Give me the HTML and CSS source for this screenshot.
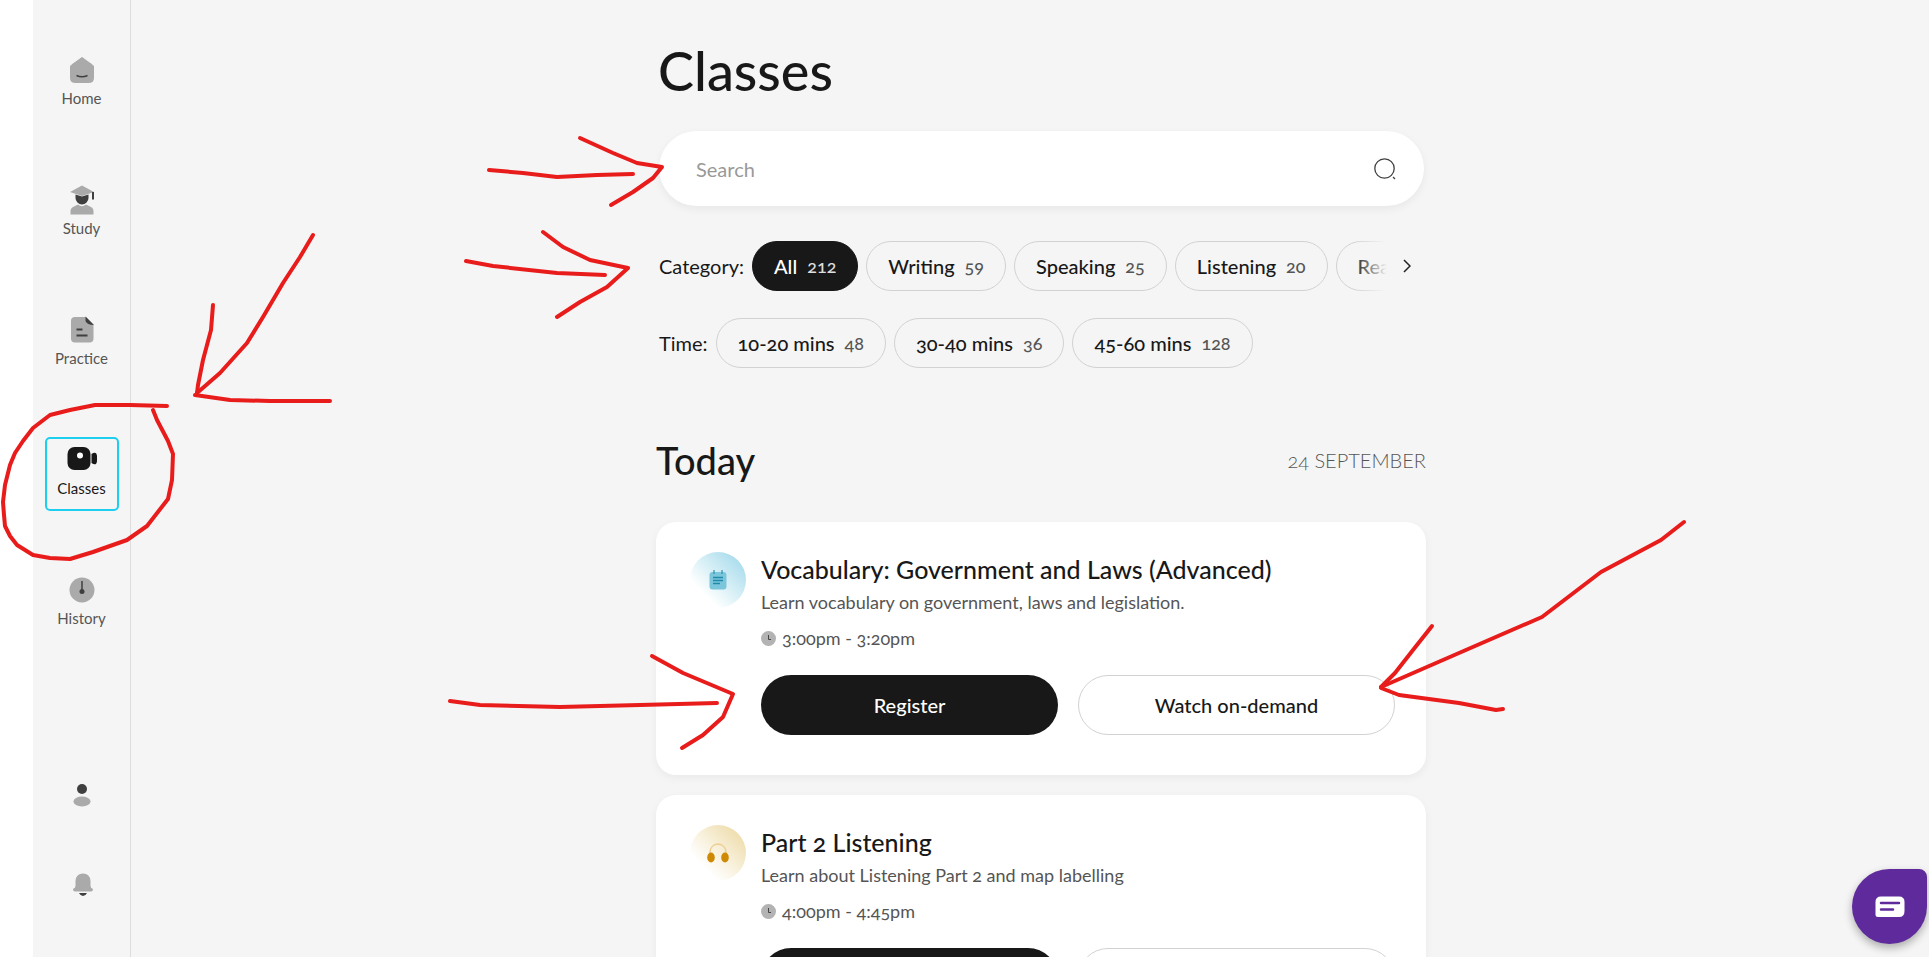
FILE: index.html
```html
<!DOCTYPE html>
<html lang="en">
<head>
<meta charset="utf-8">
<title>Classes</title>
<link rel="stylesheet" href="styles.css">
</head>
<body>
<div class="app">
	<nav class="sidebar">
		<a class="nav-item">
			<svg class="nav-icon" viewBox="0 0 30 30"><path d="M15 2.500 L25.500 10 Q26.500 10.800 26.500 12 V23.500 Q26.500 27.500 22.500 27.500 H7.500 Q3.500 27.500 3.500 23.500 V12 Q3.500 10.800 4.500 10 Z" fill="#aaa" stroke="#aaa" stroke-linejoin="round"/><path d="M9.500 20.500 Q15 23 20.500 20.500" fill="none" stroke="#3f3f3f" stroke-width="1.500"/></svg>
			<span>Home</span>
		</a>
		<a class="nav-item nav-study">
			<svg class="nav-icon" viewBox="0 0 30 30"><path d="M15 .500 L27 7 L15 11 L3 7 Z" fill="#aaa"/><path d="M8.500 9.500 L15 11.500 L21.500 9.500 V13 A6.500 6.500 0 0 1 8.500 13 Z" fill="#3f3f3f"/><rect x="25" y="7" width="2" height="7.500" fill="#3f3f3f"/><path d="M3.500 29.500 V26 Q3.500 22.500 8 21 L11 19.500 Q15 23 19 19.500 L22 21 Q26.500 22.500 26.500 26 V29.500 Z" fill="#aaa"/></svg>
			<span>Study</span>
		</a>
		<a class="nav-item">
			<svg class="nav-icon" viewBox="0 0 30 30"><path d="M8 2 H19 L26.500 10 V23.500 Q26.500 27.500 22.500 27.500 H8 Q4 27.500 4 23.500 V6 Q4 2 8 2 Z" fill="#aaa"/><path d="M18.500 1.500 L27 10 Q20 10 18.500 6 Z" fill="#3f3f3f"/><path d="M9.500 14.500 H15.500 M9.500 20.500 H20.500" stroke="#3f3f3f" stroke-width="2" fill="none"/></svg>
			<span>Practice</span>
		</a>
		<a class="nav-item nav-active">
			<svg class="nav-icon" viewBox="0 0 30 30"><rect x=".500" y="2" width="23" height="23" rx="7" fill="#181818"/><circle cx="13" cy="10.500" r="3" fill="#fff"/><path d="M24.500 9 Q29.500 5.500 30 11 V16 Q29.500 21.500 24.500 18 Z" fill="#181818"/></svg>
			<span>Classes</span>
		</a>
		<a class="nav-item">
			<svg class="nav-icon" viewBox="0 0 30 30"><circle cx="15" cy="15" r="12.500" fill="#aaa"/><path d="M15 6 V15" stroke="#3f3f3f" stroke-width="1.500"/><circle cx="15" cy="16.500" r="2.500" fill="#3f3f3f"/></svg>
			<span>History</span>
		</a>
		<div class="sidebar-bottom">
			<svg class="tool-icon" viewBox="0 0 22 24"><circle cx="11" cy="6" r="5" fill="#3f3f3f"/><ellipse cx="11" cy="18.500" rx="8.500" ry="5" fill="#aaa"/></svg>
			<svg class="tool-icon tool-bell" viewBox="0 0 22 24"><path d="M11 .500 Q18 .500 18.500 8 V13 Q18.500 15 21 16 Q21 18.500 19 18.500 H3 Q1 18.500 1 16 Q3.500 15 3.500 13 V8 Q4 .500 11 .500 Z" fill="#aaa"/><path d="M7 20 H15 Q13.500 23 11 23 Q8.500 23 7 20 Z" fill="#3f3f3f"/></svg>
		</div>
	</nav>

	<main class="content">
		<h1 class="page-title">Classes</h1>

		<div class="search">
			<span class="search-text">Search</span>
			<svg class="search-icon" viewBox="0 0 22 22"><circle cx="10.500" cy="10.500" r="9.700" fill="none" stroke="#3f3f3f" stroke-width="1.300"/><path d="M19 19 L21 21" stroke="#3f3f3f" stroke-width="1.300"/></svg>
		</div>

		<div class="filter-row">
			<span class="filter-label">Category:</span>
			<div class="pill-scroll">
				<span class="pill pill-on">All <b>212</b></span>
				<span class="pill">Writing <b>59</b></span>
				<span class="pill">Speaking <b>25</b></span>
				<span class="pill">Listening <b>20</b></span>
				<span class="pill">Reading</span>
			</div>
			<svg class="chevron" viewBox="0 0 8 14"><path d="M1 1 L7 7 L1 13" fill="none" stroke="#222" stroke-width="1.500"/></svg>
		</div>

		<div class="filter-row filter-time">
			<span class="filter-label">Time:</span>
			<span class="pill">10-20 mins <b>48</b></span>
			<span class="pill">30-40 mins <b>36</b></span>
			<span class="pill">45-60 mins <b>128</b></span>
		</div>

		<div class="day-head">
			<h2>Today</h2>
			<span class="day-date">24 SEPTEMBER</span>
		</div>

		<section class="card">
			<div class="card-icon icon-blue">
				<svg viewBox="0 0 18 20"><rect x=".500" y="2" width="17" height="17.500" rx="3" fill="#7cc6dc"/><path d="M5 0 V4 M13 0 V4" stroke="#2f8fb0" stroke-width="1.200"/><path d="M4 7.500 H14 M4 10.500 H14 M4 13.500 H11" stroke="#2389a9" stroke-width="1.300"/></svg>
			</div>
			<div class="card-body">
				<h3>Vocabulary: Government and Laws (Advanced)</h3>
				<p class="card-desc">Learn vocabulary on government, laws and legislation.</p>
				<p class="card-time">
					<svg viewBox="0 0 15 15"><circle cx="7.500" cy="7.500" r="7.500" fill="#b3b3b3"/><path d="M7.500 4 V8.500 H10" fill="none" stroke="#444" stroke-width="1"/></svg>
					3:00pm - 3:20pm
				</p>
				<div class="card-actions">
					<a class="btn btn-dark">Register</a>
					<a class="btn btn-light">Watch on-demand</a>
				</div>
			</div>
		</section>

		<section class="card">
			<div class="card-icon icon-gold">
				<svg viewBox="0 0 22 20"><path d="M3 12 V9 A8 8 0 0 1 19 9 V12" fill="none" stroke="#eccd8d" stroke-width="1.300"/><ellipse cx="4" cy="14.500" rx="3.800" ry="5" fill="#cf8a05"/><ellipse cx="18" cy="14.500" rx="3.800" ry="5" fill="#cf8a05"/></svg>
			</div>
			<div class="card-body">
				<h3>Part 2 Listening</h3>
				<p class="card-desc">Learn about Listening Part 2 and map labelling</p>
				<p class="card-time">
					<svg viewBox="0 0 15 15"><circle cx="7.500" cy="7.500" r="7.500" fill="#b3b3b3"/><path d="M7.500 4 V8.500 H10" fill="none" stroke="#444" stroke-width="1"/></svg>
					4:00pm - 4:45pm
				</p>
				<div class="card-actions">
					<a class="btn btn-dark">Register</a>
					<a class="btn btn-light">Watch on-demand</a>
				</div>
			</div>
		</section>
	</main>
</div>

<div class="chat-bubble">
	<svg viewBox="0 0 30 22"><path d="M6 .500 H24 Q29.500 .500 29.500 6 V15 Q29.500 21 24 21 H3 Q.500 21 .500 18.500 V6 Q.500 .500 6 .500 Z" fill="#fff"/><path d="M6 7 H24 M6 13.500 H18" stroke="#5f2a9c" stroke-width="2.500" stroke-linecap="round"/></svg>
</div>

<!-- red marker scribbles drawn on top of the screenshot -->
<svg class="scribbles" viewBox="0 0 1929 957">
	<polyline points="167,406 130,405 95,405 70,410 50,415 33,428 23,441 15,453 10,465 5,485 3,502 4,515 5,526 10,536 17,545 33,555 50,558 70,559 93,552 127,540 147,526 168,499 172,480 173,454 168,441 157,420 153,410"/>
	<polyline points="313,235 300,257 283,283 263,317 247,343 220,373 197,393"/>
	<polyline points="213,305 211,330 203,360 198,385 197,393"/>
	<polyline points="195,395 230,400 270,401 330,401"/>
	<polyline points="489,170 523,173 557,177 597,175 633,174"/>
	<polyline points="580,138 613,153 637,163 662,167 653,178 633,192 611,205"/>
	<polyline points="466,261 493,266 557,273 605,275"/>
	<polyline points="543,232 563,247 590,260 628,268 607,287 580,302 557,317"/>
	<polyline points="450,701 480,705 560,707 640,705 717,703"/>
	<polyline points="652,656 683,673 733,694 723,717 703,735 682,748"/>
	<polyline points="1684,522 1661,540 1601,572 1542,617 1459,653 1381,687"/>
	<polyline points="1432,626 1413,650 1395,673 1381,687"/>
	<polyline points="1381,688 1399,695 1459,703 1496,710 1503,709"/>
</svg>
</body>
</html>
```

FILE: styles.css
```css
*{
	margin: 0;
	padding: 0;
	box-sizing: border-box;
}
html, body{
	height: 100%;
	overflow: hidden;
}
body{
	background: #fff;
	font-family: "Lato", "Liberation Sans", sans-serif;
	font-variant-numeric: oldstyle-nums;
	color: #181818;
}
.app{
	display: flex;
	height: 957px;
	margin-left: 33px;
	background: #f5f5f5;
}

/* left nav */
.sidebar{
	width: 98px;
	flex: none;
	border-right: 1px solid #ddd;
	padding: 47px 11px 60px;
	display: flex;
	flex-direction: column;
	align-items: center;
	gap: 56px;
}
.nav-item{
	width: 74px;
	height: 74px;
	display: flex;
	flex-direction: column;
	align-items: center;
	padding-top: 6px;
	gap: 4px;
	font-size: 15px;
	color: #555;
	border: 2px solid transparent;
	border-radius: 5px;
}
.nav-icon{
	width: 30px;
	height: 30px;
}
.nav-active{
	border-color: #1ccfee;
	color: #181818;
}
.sidebar-bottom{
	margin-top: auto;
	display: flex;
	flex-direction: column;
	align-items: center;
	gap: 66px;
}
.tool-icon{
	width: 22px;
	height: 24px;
}
.tool-bell{
	margin-left: 3px;
}

/* main column */
.content{
	width: 770px;
	margin-left: 525px;
}
.page-title{
	font-size: 54px;
	font-weight: 500;
	line-height: 64px;
	margin: 39px 0 28px 2px;
}
.search{
	height: 75px;
	margin: 0 2px 0 3px;
	padding: 0 28px 0 37px;
	background: #fff;
	border-radius: 38px;
	box-shadow: 0 3px 8px rgba(0,0,0,0.06);
	display: flex;
	align-items: center;
	justify-content: space-between;
}
.search-text{
	font-size: 20px;
	color: #999;
}
.search-icon{
	width: 22px;
	height: 22px;
}
.filter-row{
	display: flex;
	align-items: center;
	gap: 8px;
	margin: 35px 0 0 3px;
	font-size: 20px;
}
.filter-time{
	margin-top: 27px;
}
.filter-label{
	flex: none;
}
.pill-scroll{
	position: relative;
	display: flex;
	gap: 8px;
	width: 641px;
	overflow: hidden;
}
.pill-scroll::after{
	content: "";
	position: absolute;
	top: 0;
	right: 0;
	bottom: 0;
	width: 40px;
	background: linear-gradient(to right, rgba(245,245,245,0), #f5f5f5 85%);
}
.pill{
	flex: none;
	height: 50px;
	padding: 0 21px;
	display: inline-flex;
	align-items: center;
	gap: 10px;
	border: 1px solid #d2d2d2;
	border-radius: 25px;
	font-weight: 500;
}
.pill b{
	font-size: 18px;
	font-weight: 500;
	color: #555;
}
.pill-on{
	background: #181818;
	border-color: #181818;
	color: #fff;
}
.pill-on b{
	color: #ddd;
}
.chevron{
	width: 8px;
	height: 14px;
	flex: none;
	margin-left: 2px;
}
.day-head{
	display: flex;
	justify-content: space-between;
	align-items: center;
	margin-top: 70px;
	height: 44px;
}
.day-head h2{
	font-size: 38px;
	font-weight: 500;
}
.day-date{
	font-size: 20px;
	font-weight: 300;
	color: #555;
}
.card{
	display: flex;
	gap: 15px;
	height: 253px;
	margin-top: 20px;
	padding: 30px 31px 0 34px;
	background: #fff;
	border-radius: 20px;
	box-shadow: 0 3px 8px rgba(0,0,0,0.05);
}
.day-head + .card{
	margin-top: 40px;
}
.card-icon{
	width: 56px;
	height: 56px;
	flex: none;
	display: flex;
	align-items: center;
	justify-content: center;
	border-radius: 50%;
}
.card-icon svg{
	width: 18px;
	height: 20px;
}
.icon-blue{
	background: linear-gradient(to top right, #fff 25%, #a6dbec 90%);
}
.icon-gold{
	background: linear-gradient(to top right, #fff 25%, #eedcaa 90%);
}
.icon-gold svg{
	width: 22px;
}
.card-body{
	flex: 1;
}
.card-body h3{
	font-size: 25px;
	font-weight: 500;
	line-height: 34px;
}
.card-desc{
	margin-top: 3px;
	font-size: 18px;
	line-height: 26px;
	color: #555;
}
.card-time{
	display: flex;
	align-items: center;
	gap: 6px;
	margin-top: 10px;
	font-size: 18px;
	line-height: 26px;
	color: #555;
}
.card-time svg{
	width: 15px;
	height: 15px;
}
.card-actions{
	display: flex;
	gap: 20px;
	margin-top: 24px;
}
.btn{
	height: 60px;
	display: flex;
	align-items: center;
	justify-content: center;
	border-radius: 30px;
	font-size: 20px;
	font-weight: 500;
}
.btn-dark{
	width: 297px;
	background: #181818;
	color: #fff;
}
.btn-light{
	width: 317px;
	border: 1px solid #d2d2d2;
	background: #fff;
}

/* chat bubble, stuck to the corner */
.chat-bubble{
	position: absolute;
	left: 1852px;
	top: 869px;
	width: 75px;
	height: 75px;
	display: flex;
	align-items: center;
	justify-content: center;
	background: #5f2a9c;
	border-radius: 50% 8px 50% 50%;
	box-shadow: 0 4px 8px rgba(0,0,0,0.3);
}
.chat-bubble svg{
	width: 30px;
	height: 22px;
}

/* annotation layer */
.scribbles{
	position: absolute;
	left: 0;
	top: 0;
	width: 1929px;
	height: 957px;
	pointer-events: none;
}
.scribbles polyline{
	fill: none;
	stroke: #e91c1c;
	stroke-width: 4;
	stroke-linecap: round;
	stroke-linejoin: round;
}
```
